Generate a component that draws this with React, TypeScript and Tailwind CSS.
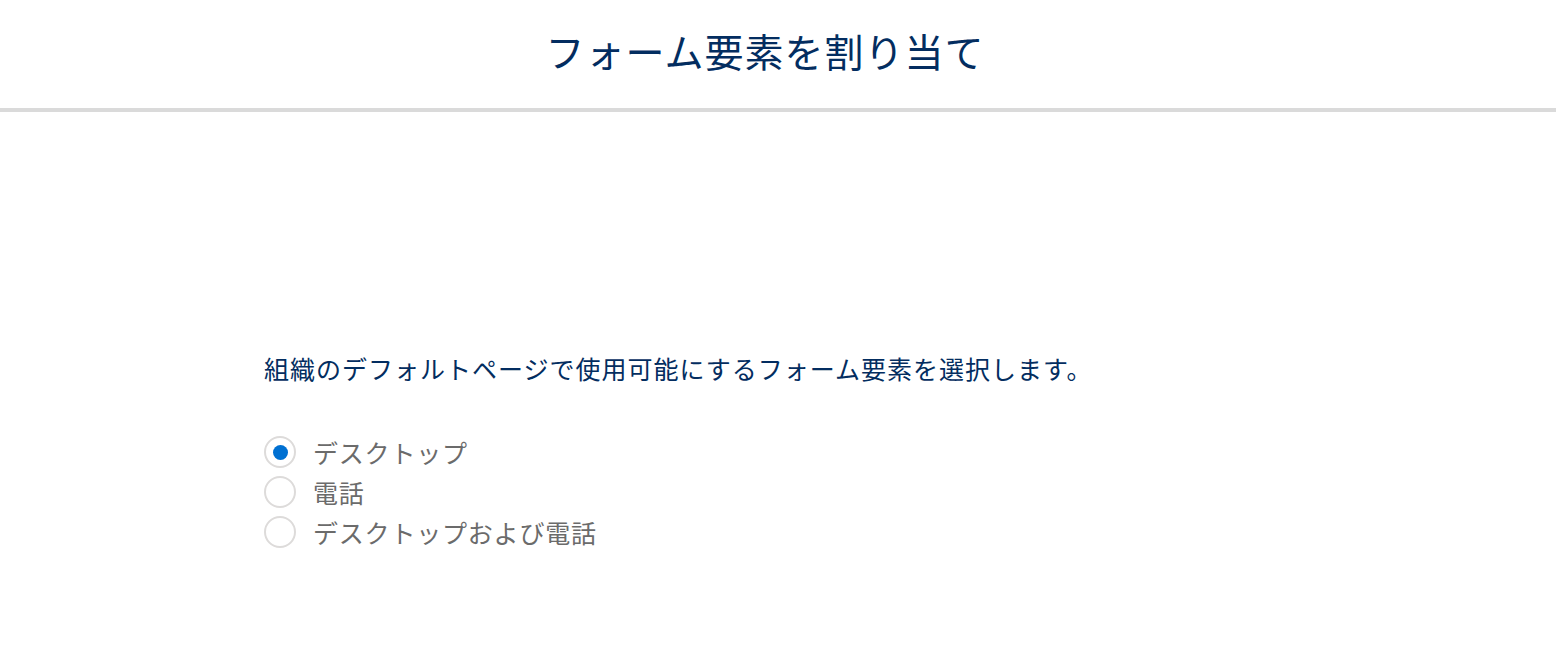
import React, { useState } from "react";

const options = [
  { value: "desktop", label: "デスクトップ" },
  { value: "phone", label: "電話" },
  { value: "both", label: "デスクトップおよび電話" },
];

const Radio = ({ checked }: { checked: boolean }) => (
  <span className="flex items-center justify-center w-[32px] h-[32px] rounded-full border-2 border-[#dddbda] bg-white shrink-0">
    {checked && <span className="w-[15px] h-[15px] rounded-full bg-[#0070d2]"></span>}
  </span>
);

const App = () => {
  const [selected, setSelected] = useState("desktop");

  return (
    <div
      className="min-h-[660px] bg-white text-[#032d60]"
      style={{ fontFamily: '"Noto Sans CJK JP", "Noto Sans", sans-serif' }}
    >
      <header className="h-[112px] border-b-[4px] border-[#dadada] flex items-center justify-center pb-[8px]">
        <h1 className="text-[39px] leading-none tracking-[1px] pr-[26px]">フォーム要素を割り当て</h1>
      </header>
      <div className="pl-[264px] pt-[244px]">
        <p className="text-[25px] leading-none tracking-[1px]">
          組織のデフォルトページで使用可能にするフォーム要素を選択します。
        </p>
        <div className="mt-[55px] flex flex-col gap-[8px]">
          {options.map((o) => (
            <label
              key={o.value}
              className="flex items-center gap-[17px] cursor-pointer"
              onClick={() => setSelected(o.value)}
            >
              <Radio checked={selected === o.value} />
              <span className="text-[25px] leading-none tracking-[0.8px] text-[#6b6b6b]">{o.label}</span>
            </label>
          ))}
        </div>
      </div>
    </div>
  );
};

export default App;
